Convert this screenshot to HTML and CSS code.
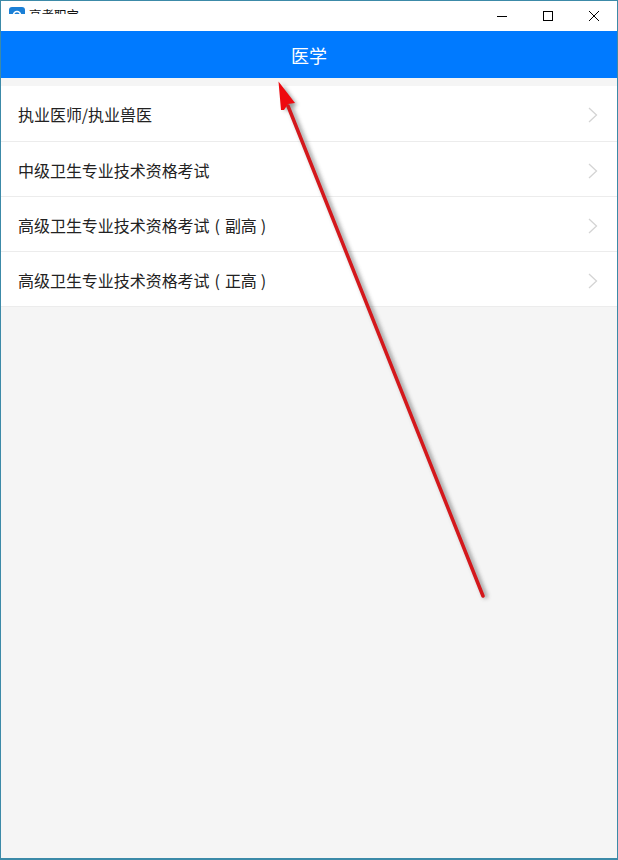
FILE: index.html
```html
<!DOCTYPE html>
<html lang="zh">
<head>
<meta charset="utf-8">
<title>医学</title>
<link rel="stylesheet" href="styles.css">
</head>
<body>
<div class="window">
  <div class="titlebar">
    <div class="app">
      <svg class="app-icon" width="16" height="16" viewBox="0 0 16 16"><rect width="16" height="16" rx="3" fill="#1a7fd6"/><circle cx="8" cy="8" r="3.5" fill="none" stroke="#fff" stroke-width="1.6"/></svg>
      <span class="app-name">高考职宝</span>
    </div>
    <div class="controls">
      <svg width="46" height="30" viewBox="0 0 46 30"><path d="M18 15.500h10" stroke="#000" stroke-width="1"/></svg>
      <svg width="46" height="30" viewBox="0 0 46 30"><rect x="18.500" y="10.500" width="9" height="9" fill="none" stroke="#000" stroke-width="1"/></svg>
      <svg width="46" height="30" viewBox="0 0 46 30"><path d="M18 10l10 10M28 10l-10 10" stroke="#000" stroke-width="1"/></svg>
    </div>
  </div>
  <header class="header">医学</header>
  <main class="content">
    <ul class="list">
      <li class="row row-first"><span>执业医师/执业兽医</span><svg class="chev" width="10" height="16" viewBox="0 0 10 16"><path d="M1 1l7.500 7L1 15" fill="none" stroke="#d4d4d4" stroke-width="1.300"/></svg></li>
      <li class="row"><span>中级卫生专业技术资格考试</span><svg class="chev" width="10" height="16" viewBox="0 0 10 16"><path d="M1 1l7.500 7L1 15" fill="none" stroke="#d4d4d4" stroke-width="1.300"/></svg></li>
      <li class="row"><span>高级卫生专业技术资格考试<span class="paren">(</span>副高<span class="paren paren-close">)</span></span><svg class="chev" width="10" height="16" viewBox="0 0 10 16"><path d="M1 1l7.500 7L1 15" fill="none" stroke="#d4d4d4" stroke-width="1.300"/></svg></li>
      <li class="row"><span>高级卫生专业技术资格考试<span class="paren">(</span>正高<span class="paren paren-close">)</span></span><svg class="chev" width="10" height="16" viewBox="0 0 10 16"><path d="M1 1l7.500 7L1 15" fill="none" stroke="#d4d4d4" stroke-width="1.300"/></svg></li>
    </ul>
  </main>
  <svg class="arrow" width="618" height="860" viewBox="0 0 618 860">
    <defs><filter id="s" x="-20%" y="-20%" width="140%" height="140%"><feGaussianBlur stdDeviation="2"/></filter></defs>
    <g filter="url(#s)" opacity=".55" transform="translate(3 2)">
      <path d="M483 596L288 106" stroke="#444" stroke-width="4" fill="none"/>
      <path d="M279 82l15 21-12 6z" fill="#444"/>
    </g>
    <path d="M483 596L288 106" stroke="#d4181c" stroke-width="3.500" fill="none" stroke-linecap="round"/>
    <path d="M278.500 81.500L295 103 288 104 284 110 281 110z" fill="#ee0a10"/>
  </svg>
</div>
</body>
</html>
```

FILE: styles.css
```css
* { box-sizing: border-box; }
html, body { margin: 0; padding: 0; }
body { width: 618px; height: 860px; overflow: hidden; font-family: "Noto Sans CJK SC", "Liberation Sans", sans-serif; }
.window { position: relative; width: 618px; height: 860px; display: flex; flex-direction: column; background: #f5f5f5; border: 1px solid #3c8aa8; border-bottom-width: 2px; }
.titlebar { height: 30px; flex: none; background: #fff; display: flex; justify-content: space-between; }
.app { display: flex; align-items: flex-start; gap: 4px; padding-top: 6px; padding-left: 8px; height: 13px; overflow: hidden; }
.app-icon { flex: none; }
.app-name { font-size: 12.500px; line-height: 16px; color: #111; }
.controls { display: flex; }
.controls svg { display: block; }
.header { height: 47px; flex: none; background: #007aff; color: #fff; font-size: 18px; line-height: 49px; text-align: center; }
.content { flex: 1; padding-top: 8px; }
.list { list-style: none; margin: 0; padding: 0; background: #fff; }
.row { height: 55px; display: flex; align-items: center; justify-content: space-between; padding: 2px 19px 0 17px; font-size: 16px; letter-spacing: -0.040px; color: #222; border-bottom: 1px solid #ececec; }
.row-first { height: 56px; padding-top: 1px; }
.paren { margin: 0 5px; }
.paren-close { margin-left: 4px; }
.chev { flex: none; position: relative; top: 1px; }
.arrow { position: absolute; left: -1px; top: -1px; pointer-events: none; }
```
